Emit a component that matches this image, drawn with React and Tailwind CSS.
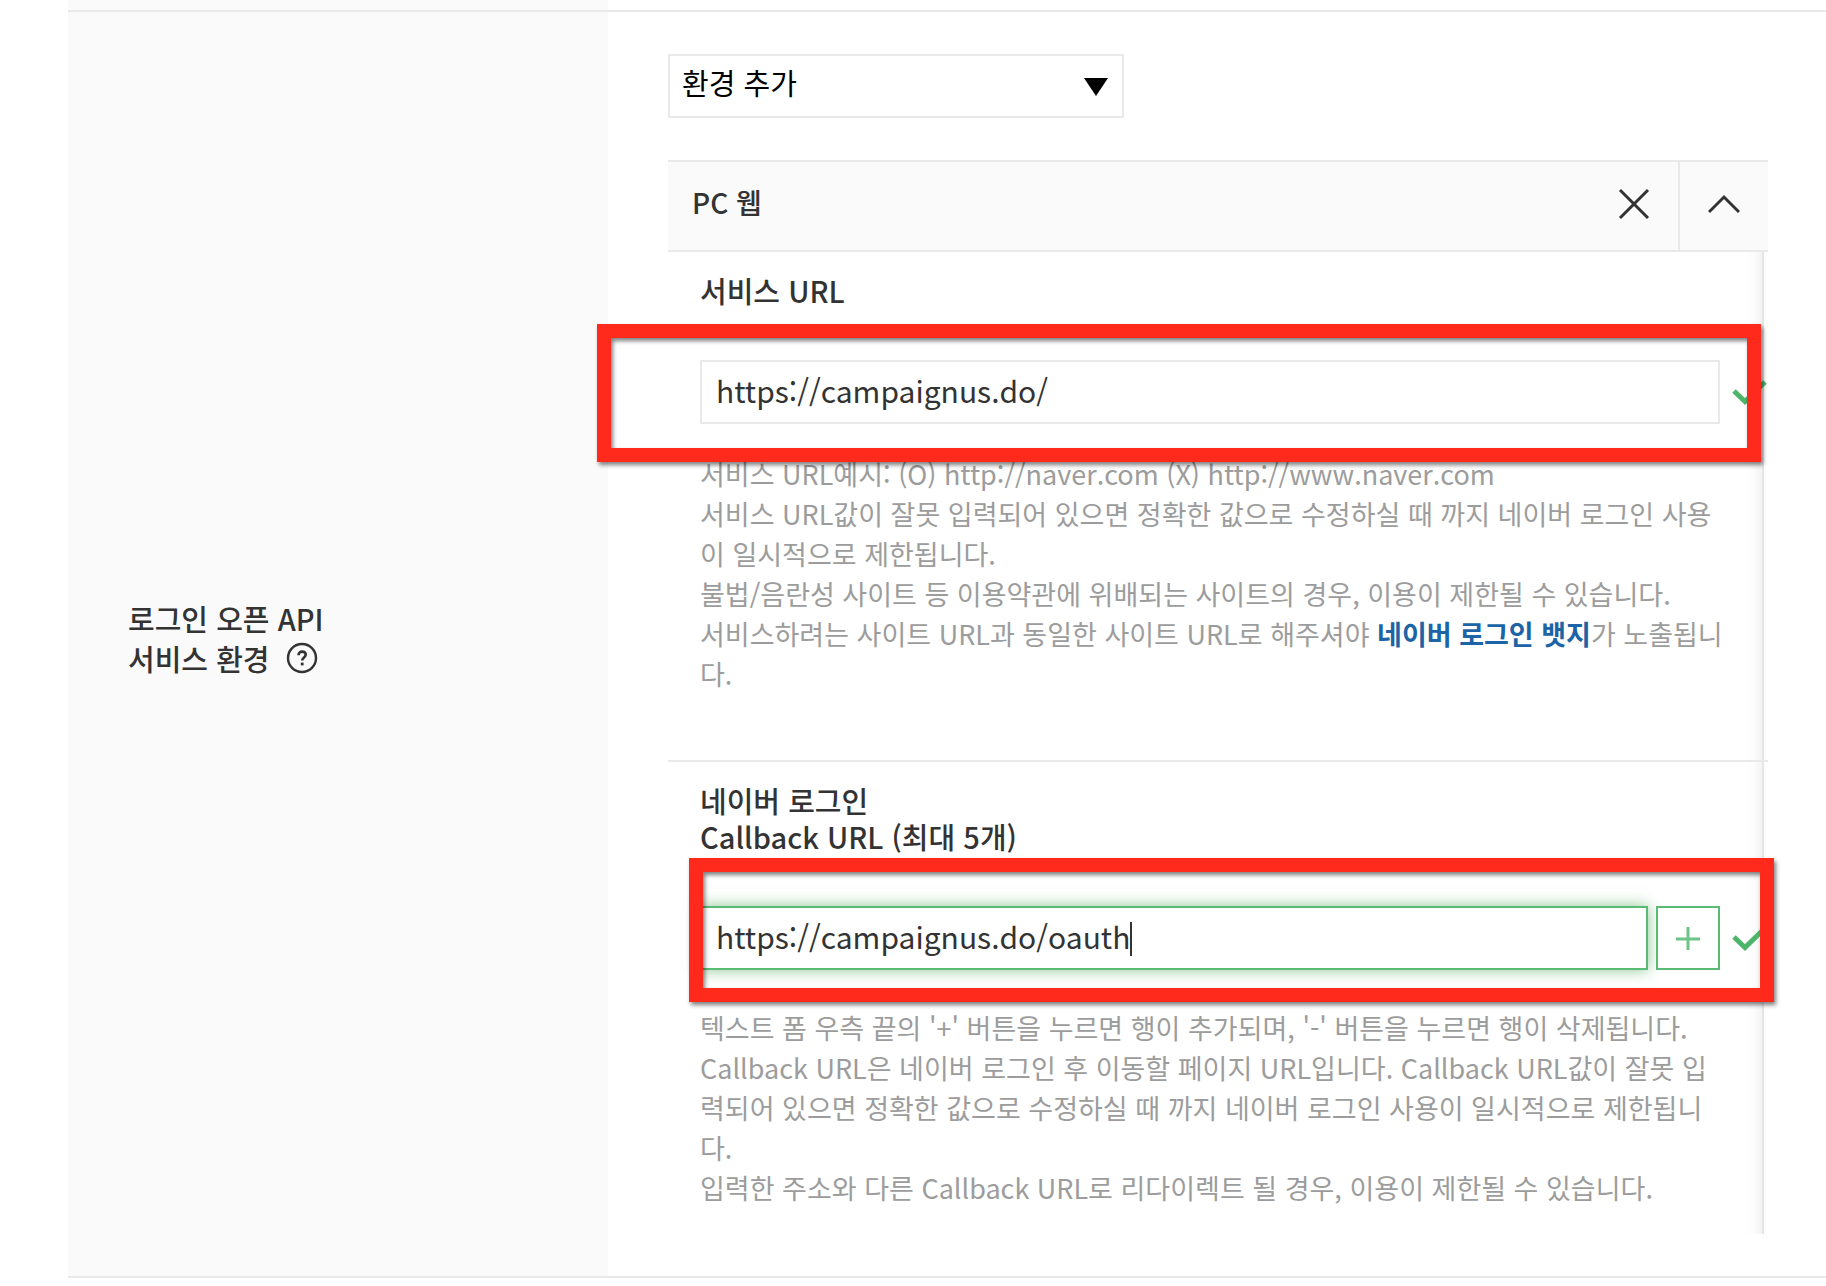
import React, { useState } from 'react';

const Check = () => (
  <svg className="w-9 h-7" viewBox="0 0 36 28" fill="none">
    <path d="M2 13 L13 23.5 L33 4" stroke="#4db56a" strokeWidth="5" />
  </svg>
);

const QuestionIcon = () => (
  <svg className="w-8 h-8" viewBox="0 0 32 32" fill="none" stroke="#333">
    <circle cx="16" cy="16" r="14" strokeWidth="2.4" />
    <path d="M12.5 13.2c0-2.2 1.5-3.6 3.6-3.6s3.6 1.3 3.6 3.2c0 2.6-3.5 2.7-3.5 5.6" strokeWidth="2.6" />
    <path d="M16.2 20.6v2.8" strokeWidth="2.8" />
  </svg>
);

const HelpText = ({ id, children }) => (
  <div id={id} className="mr-10 text-[27px] leading-10 text-[#9c9c9c] break-all">
    {children}
  </div>
);

const App = () => {
  const [env, setEnv] = useState('add');
  const [serviceUrl, setServiceUrl] = useState('https://campaignus.do/');
  const [callbackUrl, setCallbackUrl] = useState('https://campaignus.do/oauth');
  const [open, setOpen] = useState(true);

  return (
    <div
      lang="ko"
      className="bg-white pl-[68px] pb-2 text-[#333] font-['Noto_Sans_CJK_KR',sans-serif]"
    >
      {/* Bottom edge of the previous row */}
      <div className="h-[10px] w-[540px] bg-[#fafafa]" />

      <div className="flex border-y-2 border-[#e9e9e9]">
        <div className="w-[540px] shrink-0 bg-[#fafafa] flex items-center pl-[60px] pb-3">
          <div className="text-[29px] leading-10 font-medium">
            <p>로그인 오픈 API</p>
            <div className="flex items-center gap-4">
              <span>서비스 환경</span>
              <button aria-label="도움말">
                <QuestionIcon />
              </button>
            </div>
          </div>
        </div>

        <div className="flex-1 min-w-0 pl-[60px] pr-[58px] py-[42px]">
          {/* Environment select */}
          <div className="relative w-[456px]">
            <select
              aria-label="환경 추가"
              value={env}
              onChange={(e) => setEnv(e.target.value)}
              className="block w-full h-16 pl-3 pb-2 appearance-none rounded-none border-2 border-[#e9e9e9] bg-white text-[29px] leading-10 text-black"
            >
              <option value="add">환경 추가</option>
            </select>
            <svg
              className="absolute right-4 top-6 w-6 h-[18px] pointer-events-none"
              viewBox="0 0 24 18"
            >
              <path d="M0 0h24L12 18z" fill="#000" />
            </svg>
          </div>

          {/* PC web panel */}
          <div className="mt-[42px]">
            <div className="flex h-[92px] border-y-2 border-[#e9e9e9] bg-[#fafafa]">
              <h2 className="flex-1 pl-6 pb-2 flex items-center text-[28px] leading-10 font-medium">PC 웹</h2>
              <button aria-label="삭제" className="w-[88px] flex items-center justify-center pb-1">
                <svg className="w-8 h-8" viewBox="0 0 32 32" fill="none" stroke="#333" strokeWidth="3">
                  <path d="M2 2 L30 30 M30 2 L2 30" />
                </svg>
              </button>
              <button
                aria-label="접기"
                onClick={() => setOpen(!open)}
                className="w-[90px] flex items-center justify-center border-l-2 border-[#e9e9e9] pb-1"
              >
                <svg className="w-8 h-5" viewBox="0 0 32 20" fill="none" stroke="#333" strokeWidth="3">
                  <path d="M1 18 L16 3 L31 18" />
                </svg>
              </button>
            </div>

            {open && (
              <div className="relative">
                <div className="absolute inset-y-0 right-1 w-[18px] border-r-2 border-[#e6e6e6] bg-linear-to-r from-white via-[#fcfcfc] to-[#f3f3f3]" />

                <section className="relative pl-8 pt-[18px] pb-[66px]">
                  <label htmlFor="service-url" className="block text-[29px] leading-10 font-medium">
                    서비스 URL
                  </label>
                  <div className="relative mt-[50px] flex items-center gap-3">
                    <input
                      id="service-url"
                      type="text"
                      value={serviceUrl}
                      onChange={(e) => setServiceUrl(e.target.value)}
                      aria-describedby="service-help"
                      className="flex-1 min-w-0 h-16 px-[14px] pb-1 border-2 border-[#e9e9e9] bg-white text-[30px] leading-10 outline-none"
                    />
                    <Check />
                    <div className="absolute -left-[103px] right-[7px] -top-9 -bottom-[38px] border-[14px] border-[#ff2a1b] drop-shadow-[2px_3px_2px_rgba(0,0,0,0.5)] pointer-events-none" />
                  </div>
                  <div className="mt-[30px]">
                    <HelpText id="service-help">
                      <p>서비스 URL예시: (O) http://naver.com (X) http://www.naver.com</p>
                      <p>
                        서비스 URL값이 잘못 입력되어 있으면 정확한 값으로 수정하실 때 까지 네이버 로그인
                        사용이 일시적으로 제한됩니다.
                      </p>
                      <p>불법/음란성 사이트 등 이용약관에 위배되는 사이트의 경우, 이용이 제한될 수 있습니다.</p>
                      <p>
                        서비스하려는 사이트 URL과 동일한 사이트 URL로 해주셔야{' '}
                        <a href="#badge" className="font-bold text-[#1c64a5]">네이버 로그인 뱃지</a>가 노출됩니다.
                      </p>
                    </HelpText>
                  </div>
                </section>

                <section className="relative border-t-2 border-[#e9e9e9] pl-8 pt-5 pb-[26px]">
                  <label htmlFor="callback-url" className="block text-[29px] leading-9 font-medium">
                    네이버 로그인
                    <br />
                    Callback URL (최대 5개)
                  </label>
                  <div className="relative mt-[52px] flex items-center">
                    <input
                      id="callback-url"
                      type="text"
                      value={callbackUrl}
                      onChange={(e) => setCallbackUrl(e.target.value)}
                      aria-describedby="callback-help"
                      className="flex-1 min-w-0 h-16 px-[14px] pb-1 border-2 border-[#5aba76] bg-white text-[30px] leading-10 outline-none shadow-[0_0_14px_rgba(60,160,70,0.6)]"
                    />
                    {/* Text cursor */}
                    <span className="absolute left-[430px] top-4 w-[2px] h-[34px] bg-[#333]" />
                    <button
                      aria-label="행 추가"
                      className="ml-2 mr-3 w-16 h-16 flex items-center justify-center border-2 border-[#5aba76] bg-white"
                    >
                      <svg className="w-6 h-6" viewBox="0 0 24 24" fill="none" stroke="#6cc486" strokeWidth="3">
                        <path d="M0 13h24M12 1v24" />
                      </svg>
                    </button>
                    <Check />
                    <div className="absolute -left-[11px] -right-[6px] -top-12 -bottom-8 border-[14px] border-[#ff2a1b] drop-shadow-[2px_3px_2px_rgba(0,0,0,0.5)] pointer-events-none" />
                  </div>
                  <div className="mt-[38px]">
                    <HelpText id="callback-help">
                      <p>텍스트 폼 우측 끝의 '+' 버튼을 누르면 행이 추가되며, '-' 버튼을 누르면 행이 삭제됩니다.</p>
                      <p>
                        Callback URL은 네이버 로그인 후 이동할 페이지 URL입니다. Callback URL값이 잘못
                        입력되어 있으면 정확한 값으로 수정하실 때 까지 네이버 로그인 사용이 일시적으로
                        제한됩니다.
                      </p>
                      <p>입력한 주소와 다른 Callback URL로 리다이렉트 될 경우, 이용이 제한될 수 있습니다.</p>
                    </HelpText>
                  </div>
                </section>
              </div>
            )}
          </div>
        </div>
      </div>
    </div>
  );
};

export default App;
